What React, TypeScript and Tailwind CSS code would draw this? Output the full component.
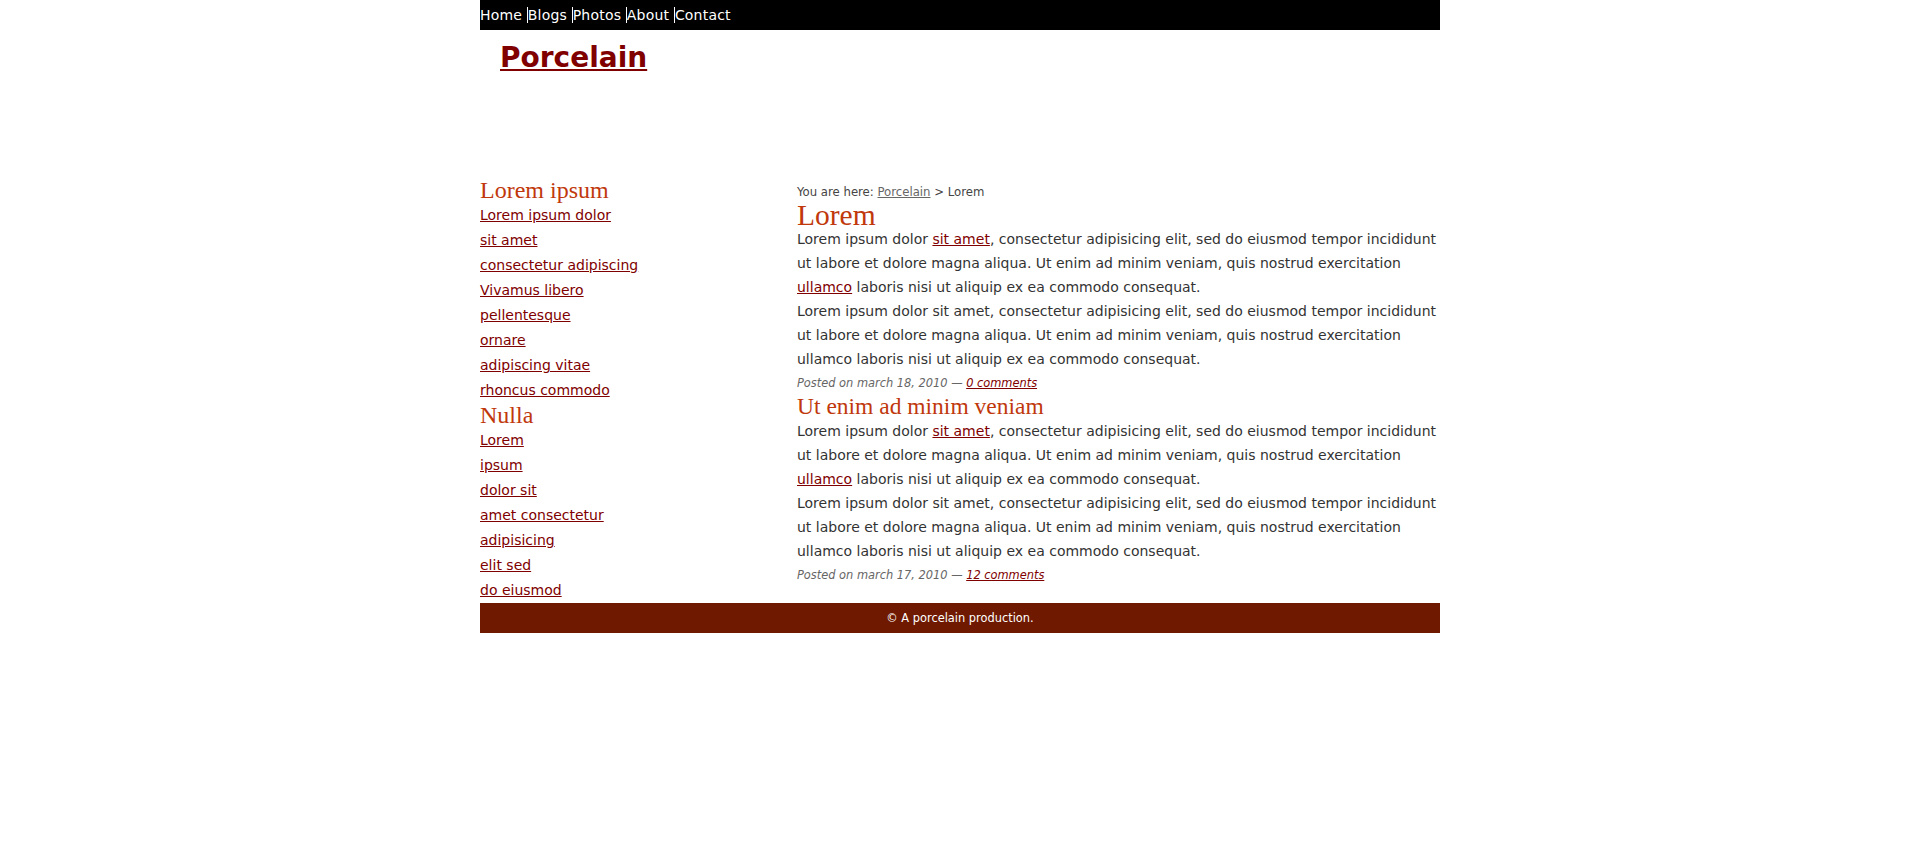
const sans = "font-['DejaVu_Sans',Verdana,sans-serif]";
const serif = "font-['Liberation_Serif','Times_New_Roman',serif]";

const navItems = ["Home", "Blogs", "Photos", "About", "Contact"];

const sidebar = [
  {
    title: "Lorem ipsum",
    links: [
      "Lorem ipsum dolor",
      "sit amet",
      "consectetur adipiscing",
      "Vivamus libero",
      "pellentesque",
      "ornare",
      "adipiscing vitae",
      "rhoncus commodo",
    ],
  },
  {
    title: "Nulla",
    links: ["Lorem", "ipsum", "dolor sit", "amet consectetur", "adipisicing", "elit sed", "do eiusmod"],
  },
];

const posts = [
  { title: "Lorem", big: true, date: "march 18, 2010", comments: "0 comments" },
  { title: "Ut enim ad minim veniam", big: false, date: "march 17, 2010", comments: "12 comments" },
];

function Post({ title, big, date, comments }: { title: string; big: boolean; date: string; comments: string }) {
  return (
    <div>
      {big ? (
        <h1 className={`${serif} text-[29.5px] leading-[21.5px] pt-[4px] text-[#c0380c]`}>{title}</h1>
      ) : (
        <h2 className={`${serif} text-[23.5px] leading-[26px] text-[#c0380c]`}>{title}</h2>
      )}
      <p className="text-[14px] leading-[24px] text-[#333]">
        Lorem ipsum dolor{" "}
        <a href="#" className="text-[#800000] underline">
          sit amet
        </a>
        , consectetur adipisicing elit, sed do eiusmod tempor incididunt ut labore et dolore magna aliqua. Ut enim ad
        minim veniam, quis nostrud exercitation{" "}
        <a href="#" className="text-[#800000] underline">
          ullamco
        </a>{" "}
        laboris nisi ut aliquip ex ea commodo consequat.
      </p>
      <p className="text-[14px] leading-[24px] text-[#333]">
        Lorem ipsum dolor sit amet, consectetur adipisicing elit, sed do eiusmod tempor incididunt ut labore et dolore
        magna aliqua. Ut enim ad minim veniam, quis nostrud exercitation ullamco laboris nisi ut aliquip ex ea commodo
        consequat.
      </p>
      <p className="mt-[2px] text-[11.4px] leading-[20px] italic text-[#666]">
        Posted on {date} &mdash;{" "}
        <a href="#" className="text-[#800000] underline">
          {comments}
        </a>
      </p>
    </div>
  );
}

export default function App() {
  return (
    <div className={`${sans} min-h-screen bg-white`}>
      <div className="ml-[480px] w-[960px]">
        <nav className="h-[30px] bg-black text-[14px] leading-[30px] tracking-[0.2px] text-white">
          {navItems.map((item, i) => (
            <span key={item}>
              <a href="#" className={i > 0 ? "border-l border-white" : ""}>
                {item}
              </a>{" "}
            </span>
          ))}
        </nav>

        <header className="h-[148px] pt-[11px] pl-[20px]">
          <h1 className="text-[28px] leading-[34px] font-bold">
            <a href="#" className="text-[#800000] underline">
              Porcelain
            </a>
          </h1>
        </header>

        <div className="flex">
          <aside className="w-[317px] shrink-0">
            {sidebar.map((group) => (
              <div key={group.title}>
                <h3 className={`${serif} text-[24px] leading-[25px] text-[#c0380c]`}>{group.title}</h3>
                <ul className="text-[14px] leading-[25px]">
                  {group.links.map((l) => (
                    <li key={l}>
                      <a href="#" className="text-[#800000] underline">
                        {l}
                      </a>
                    </li>
                  ))}
                </ul>
              </div>
            ))}
          </aside>

          <main className="flex-1 pt-[5px]">
            <div className="text-[11.7px] leading-[18px] text-[#444]">
              You are here:{" "}
              <a href="#" className="text-[#666] underline">
                Porcelain
              </a>{" "}
              &gt; Lorem
            </div>
            {posts.map((p) => (
              <Post key={p.title} {...p} />
            ))}
          </main>
        </div>

        <footer className="h-[30px] bg-[#6e1900] text-center text-[11.4px] leading-[30px] text-white">
          &copy; A porcelain production.
        </footer>
      </div>
    </div>
  );
}
